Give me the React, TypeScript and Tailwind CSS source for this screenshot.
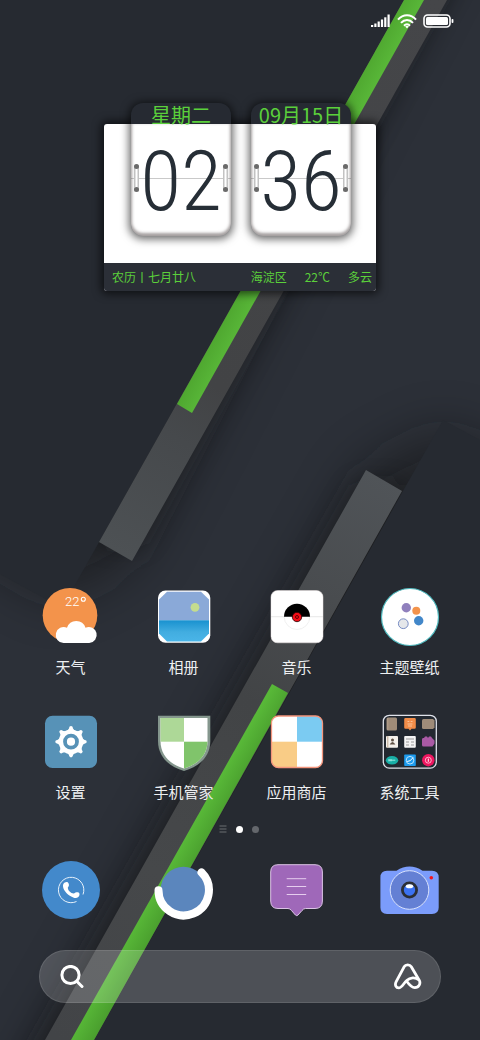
import type { ReactNode } from "react";

const CJK = "font-['Noto_Sans_CJK_SC',sans-serif]";

function Wallpaper() {
  return (
    <svg
      className="absolute inset-0 -z-10 h-full w-full"
      viewBox="0 0 480 1040"
      preserveAspectRatio="xMidYMid slice"
      aria-hidden="true"
    >
      <defs>
        <filter id="soft" x="-50%" y="-50%" width="200%" height="200%">
          <feGaussianBlur stdDeviation="26" />
        </filter>
        <filter id="tight" x="-50%" y="-50%" width="200%" height="200%">
          <feGaussianBlur stdDeviation="13" />
        </filter>
        <linearGradient id="grayTop" gradientUnits="userSpaceOnUse" x1="440" y1="0" x2="115" y2="550">
          <stop offset="0" stopColor="#454649" />
          <stop offset="0.7" stopColor="#424345" />
          <stop offset="0.8" stopColor="#46494c" />
          <stop offset="1" stopColor="#4d5154" />
        </linearGradient>
        <linearGradient id="grayLow" gradientUnits="userSpaceOnUse" x1="385" y1="480" x2="60" y2="1040">
          <stop offset="0" stopColor="#505458" />
          <stop offset="0.4" stopColor="#424446" />
          <stop offset="0.7" stopColor="#46484a" />
          <stop offset="1" stopColor="#424447" />
        </linearGradient>
        <linearGradient id="greenTop" gradientUnits="userSpaceOnUse" x1="207" y1="346" x2="225" y2="356">
          <stop offset="0" stopColor="#4ea62f" />
          <stop offset="1" stopColor="#58b638" />
        </linearGradient>
        <linearGradient id="greenLow" gradientUnits="userSpaceOnUse" x1="193" y1="824" x2="212" y2="835">
          <stop offset="0" stopColor="#58b838" />
          <stop offset="1" stopColor="#4a9f2e" />
        </linearGradient>
      </defs>
      <rect width="480" height="1040" fill="#2c3038" />
      <g fill="#121517">
        <path d="M-60 -60H450L132 561L60 600L-60 530Z" filter="url(#soft)" opacity=".5" />
        <path d="M-60 -60H475L140 545L99 542Z" filter="url(#tight)" opacity=".45" />
        <path d="M540 1100H10L366 470L443 430L540 478Z" filter="url(#soft)" opacity=".5" />
        <path d="M540 1100H8L358 484L402 485Z" filter="url(#tight)" opacity=".45" />
      </g>
      <path d="M0 0H404L62 608L0 574Z" fill="#262a31" />
      <path d="M404 0H447L132 561L99 542Z" fill="url(#grayTop)" />
      <path d="M404 0H424L192 413L177 404Z" fill="url(#greenTop)" />
      <path d="M480 440L443 420L94 1040H480Z" fill="#262a31" />
      <path d="M366 470L402 491L94 1040H45Z" fill="url(#grayLow)" />
      <path d="M272 684L288 693L94 1040H71Z" fill="url(#greenLow)" />
    </svg>
  );
}

function StatusBar() {
  return (
    <header className="flex h-[42px] items-center justify-end gap-[6px] pr-[26px] text-white">
      <svg width="20" height="14" viewBox="0 0 20 14" fill="currentColor" role="img" aria-label="信号">
        <rect x="0" y="11" width="2.200" height="2" />
        <rect x="3.300" y="9.500" width="2.200" height="3.500" />
        <rect x="6.600" y="7.500" width="2.200" height="5.500" />
        <rect x="9.900" y="5.500" width="2.200" height="7.500" />
        <rect x="13.200" y="3.300" width="2.200" height="9.700" />
        <rect x="16.500" y="0.500" width="2.200" height="12.500" />
      </svg>
      <svg width="20" height="15" viewBox="0 0 20 15" fill="none" stroke="currentColor" strokeWidth="2" role="img" aria-label="无线网络">
        <path d="M1 5.600C6-.2 14-.2 19 5.600" />
        <path d="M4 8.800C7.400 5 12.600 5 16 8.800" />
        <path d="M7 11.700C8.800 9.800 11.200 9.800 13 11.700" />
        <path d="M8.200 12.600Q10 11 11.800 12.600L10 14.600Z" fill="currentColor" stroke="none" />
      </svg>
      <svg width="31" height="14" viewBox="0 0 31 14" role="img" aria-label="电量">
        <rect x="1" y="1" width="26" height="12" rx="3.500" fill="none" stroke="currentColor" strokeWidth="1.600" />
        <rect x="3" y="3" width="22" height="8" rx="1.500" fill="currentColor" />
        <rect x="28.600" y="5" width="1.800" height="4" rx=".8" fill="currentColor" />
      </svg>
    </header>
  );
}

function Hinge() {
  return (
    <span className="relative mt-10 flex h-7 w-[5px] flex-col justify-between rounded-full bg-linear-to-r from-[#b4b4b4] via-white to-[#b4b4b4]">
      <span className="h-[5px] rounded-full bg-[#6a6a6a]" />
      <span className="h-[5px] rounded-full bg-[#6a6a6a]" />
    </span>
  );
}

function FlipCard({ title, value }: { title: string; value: string }) {
  return (
    <div className="w-[100px] rounded-xl bg-[#262a32] shadow-[0_1px_8px_2px_rgba(0,0,0,0.6)]">
      <p className="h-[21px] text-center text-xl leading-6 whitespace-nowrap text-[#5bd03b]">{title}</p>
      <div className="flex h-28 items-start justify-between rounded-b-xl bg-white bg-[linear-gradient(#c9c9c9,#c9c9c9)] bg-[length:100%_1px] bg-[position:0_54px] bg-no-repeat px-[3px] shadow-[inset_0_-2px_3px_1px_rgba(90,80,80,0.55)]">
        <Hinge />
        <span className="font-['Liberation_Sans_Narrow','Roboto_Condensed','Liberation_Sans',sans-serif] text-[84px] leading-[116px] font-light text-[#262e36]">
          {value}
        </span>
        <Hinge />
      </div>
    </div>
  );
}

function ClockWidget() {
  return (
    <section className="mx-auto mt-[82px] w-[272px] rounded-[3px] bg-white shadow-[0_0_8px_3px_rgba(0,0,0,0.6)]">
      <div className="flex justify-center pb-[27px] pl-[2px]">
        <div className="-mt-[21px] flex gap-5">
          <FlipCard title="星期二" value="02" />
          <FlipCard title="09月15日" value="36" />
        </div>
      </div>
      <div className="flex h-7 items-center justify-between rounded-b-[3px] bg-[#2b2f37] pr-1 pl-2 text-xs text-[#5bd03b]">
        <span>农历丨七月廿八</span>
        <div className="flex gap-[18px]">
          <span>海淀区</span>
          <span>22℃</span>
          <span>多云</span>
        </div>
      </div>
    </section>
  );
}

function Icon({ children }: { children: ReactNode }) {
  return (
    <svg width="60" height="60" viewBox="0 0 60 60" aria-hidden="true">
      {children}
    </svg>
  );
}

const weather = (
  <Icon>
    <circle cx="29" cy="28.3" r="27.3" fill="#f3934b" />
    <text x="24" y="19" fontSize="13" fill="#fff" fontFamily="Roboto, sans-serif" fontWeight="300">22</text>
    <circle cx="42.3" cy="12.2" r="2" fill="none" stroke="#fff" strokeWidth="1.1" />
    <path d="M22.500 56A8 8 0 1 1 26 40.700A9.700 9.700 0 0 1 44.500 40.700A8 8 0 1 1 48.300 56Z" fill="#fff" />
  </Icon>
);

const album = (
  <Icon>
    <defs>
      <linearGradient id="sea" x1="0" y1="0" x2="0" y2="1">
        <stop offset="0" stopColor="#1991cf" />
        <stop offset="0.55" stopColor="#42ade0" />
        <stop offset="1" stopColor="#4ab5e8" />
      </linearGradient>
    </defs>
    <rect x="4" y="3.5" width="52.300" height="52.300" rx="7.500" fill="#fff" />
    <path d="M13 4.800H47L55 12.500V33.300H5V12.500Z" fill="#8aa9d8" />
    <path d="M5 33.300H55V46.500L47 54.500H13L5 46.500Z" fill="url(#sea)" />
    <circle cx="41" cy="20.300" r="4.400" fill="#c4dc8f" />
  </Icon>
);

const music = (
  <Icon>
    <rect x="4" y="3.500" width="52" height="52.300" rx="6.500" fill="#fff" stroke="#e8e0e0" strokeWidth=".5" />
    <path d="M4 29.700H56" stroke="#dcdcdc" strokeWidth=".7" />
    <circle cx="30" cy="29.700" r="12.800" fill="#fff" stroke="#e9e9e9" strokeWidth=".7" />
    <path d="M17 29.700A13 13 0 0 1 43 29.700Z" fill="#000" />
    <circle cx="30" cy="30" r="4.700" fill="#f20d18" stroke="#200" strokeWidth=".8" />
    <circle cx="30" cy="30" r="1.500" fill="none" stroke="#500" strokeWidth=".9" />
  </Icon>
);

const theme = (
  <Icon>
    <circle cx="30" cy="30" r="28.500" fill="#fff" stroke="#4fb9be" strokeWidth="1.200" />
    <circle cx="26.300" cy="20.700" r="4.700" fill="#9080bd" />
    <circle cx="36.300" cy="23.700" r="4" fill="#f3934b" />
    <circle cx="38.700" cy="33.700" r="4.700" fill="#4287c9" />
    <circle cx="23.300" cy="36.700" r="4.900" fill="#e5e7ea" stroke="#6a80bd" strokeWidth=".9" />
  </Icon>
);

const settings = (
  <Icon>
    <rect x="4" y="3.700" width="52" height="52.300" rx="7.500" fill="#5792b7" />
    <g transform="translate(30 29.700)" fill="#fff">
      {[0, 45, 90, 135, 180, 225, 270, 315].map((a) => (
        <g key={a} transform={`rotate(${a})`}>
          <path d="M-4 -10.500L-1.500 -14H1.500L4 -10.500Z" />
          <circle cx="0" cy="-13.900" r="1.800" />
        </g>
      ))}
      <circle r="12.300" />
      <circle r="6" fill="none" stroke="#5792b7" strokeWidth="3.800" />
    </g>
  </Icon>
);

const shield = (
  <Icon>
    <defs>
      <clipPath id="shieldClip">
        <path d="M6.500 6H53.500V29C53.500 43 44 52.500 30 56.500C16 52.500 6.500 43 6.500 29Z" />
      </clipPath>
    </defs>
    <path d="M4 3.700H56.300V29C56.300 44 46 54.500 30 59C14 54.500 4 44 4 29Z" fill="#84968d" />
    <g clipPath="url(#shieldClip)">
      <rect width="60" height="60" fill="#fff" />
      <rect width="30" height="29.700" fill="#add897" />
      <rect x="30" y="29.700" width="30" height="31" fill="#80c46b" />
    </g>
  </Icon>
);

const store = (
  <Icon>
    <defs>
      <clipPath id="storeClip">
        <rect x="4.500" y="4" width="51" height="51.500" rx="7" />
      </clipPath>
    </defs>
    <g clipPath="url(#storeClip)">
      <rect width="60" height="60" fill="#fff" />
      <rect x="30" width="30" height="29.700" fill="#7bcbf2" />
      <rect y="29.700" width="30" height="31" fill="#f9cc86" />
    </g>
    <rect x="4.500" y="4" width="51" height="51.500" rx="7" fill="none" stroke="#f4957c" strokeWidth="1.300" />
  </Icon>
);

const tools = (
  <Icon>
    <rect x="3.300" y="3.300" width="53" height="52.800" rx="6" fill="#222830" stroke="#dfe2ea" strokeWidth="1.300" />
    <rect x="6.500" y="5.500" width="10.500" height="13" rx="1.500" fill="#9f8c79" />
    <path d="M7.800 6V18" stroke="#b9a692" strokeWidth=".8" />
    <path d="M25.500 6H34.500Q35.800 6 35.800 7.300V15.500Q35.800 16.800 34.500 16.800H31.500L30 18.600L28.500 16.800H25.500Q24.200 16.800 24.200 15.500V7.300Q24.200 6 25.500 6Z" fill="#f18c48" />
    <path d="M27.500 9.500H29.300M30.700 9.500H32.500M27.500 12H32.500M28 14H32" stroke="#fbd0ae" strokeWidth=".8" />
    <path d="M43.500 7H53L54.500 8.500V15.500L53 17H43.500Q42 17 42 15.500V8.500Q42 7 43.500 7Z" fill="#9f8c79" />
    <rect x="6" y="24" width="12" height="11.800" rx="1" fill="#f4f1ec" />
    <path d="M7.800 24V35.800" stroke="#b9a692" />
    <circle cx="12.500" cy="28" r="1.500" fill="#5e5145" />
    <path d="M9.600 32.500Q12.500 27.500 15.400 32.500Z" fill="#5e5145" />
    <rect x="24.200" y="24" width="11.600" height="11.800" rx="1" fill="#f4f4f4" />
    <path d="M26 27H34M26 30H29M31 30H34M26 33H29M31 33H34" stroke="#999" strokeWidth="1.100" />
    <path d="M43 26H44L45 24.500H47L48 26L49 24.500H51L52 26L54.500 28.500V31.500L52.500 34.500H43.500Q42 34.500 42 33V27.500Q42 26 43 26Z" fill="#a95aa5" />
    <ellipse cx="12" cy="48.200" rx="6.200" ry="4.300" fill="#19afa7" />
    <path d="M8.700 48.200H15.300M9 47V49.400M11 47V49.400" stroke="#a9efe8" strokeWidth=".9" />
    <rect x="24.200" y="42.400" width="11.600" height="11.600" rx=".8" fill="#1c9bee" />
    <circle cx="30" cy="48.200" r="3.800" fill="none" stroke="#cdeaff" strokeWidth=".9" />
    <path d="M27.200 49.500L30 48.700L33.300 45.500" fill="none" stroke="#fff" strokeWidth="1" />
    <circle cx="48.300" cy="48.200" r="6.200" fill="#ee155f" />
    <circle cx="48.300" cy="48.200" r="3" fill="none" stroke="#ffc0d4" strokeWidth=".9" />
    <path d="M48.300 46.500V49.800" stroke="#fff" strokeWidth="1" />
  </Icon>
);

const phone = (
  <Icon>
    <circle cx="30" cy="30" r="29" fill="#4389cb" />
    <path d="M35.500 41.500A12.700 12.700 0 1 1 42 34.500" fill="none" stroke="#e6f1fb" strokeWidth="1" />
    <path
      d="M22.500 23.800C23.500 22 26.500 21 27.500 23.200C28.300 25 28 26.300 26.800 27.500C26.800 30.500 30 33.700 33 33.500C34.500 32.200 38.500 31.500 38.500 34.200C38.700 37 35.300 38.500 32.800 37.700C27.300 36 22.300 30.700 22 26.300C21.900 25.300 22 24.600 22.500 23.800Z"
      fill="#fff"
    />
  </Icon>
);

const browser = (
  <Icon>
    <circle cx="29.500" cy="29.500" r="22.800" fill="#5b86bd" />
    <path d="M47.500 12.400A25.200 25.200 0 1 1 4.500 30.200" fill="none" stroke="#fff" strokeWidth="8" strokeLinecap="round" />
  </Icon>
);

const message = (
  <Icon>
    <path
      d="M11 4.700H48Q55.400 4.700 55.400 12V41Q55.400 48.500 48 48.500H38.500Q36.500 48.500 35 50.500L31 55Q29.700 56.300 28.400 55L24.500 50.500Q23 48.500 21 48.500H11Q3.700 48.500 3.700 41V12Q3.700 4.700 11 4.700Z"
      fill="#9f68b9"
      stroke="#dcc4e6"
      strokeWidth="1"
    />
    <path d="M19.700 18.700H39.200M19.700 26.500H39.200M19.700 34.500H39.200" stroke="#e6cdee" strokeWidth="1" />
  </Icon>
);

const camera = (
  <Icon>
    <path d="M7 10.700H16.500Q29.500 2.500 42.500 10.700H52Q58.700 10.700 58.700 17.500V47.500Q58.700 54 52 54H7Q.4 54 .4 47.500V17.500Q.4 10.700 7 10.700Z" fill="#7b9cfb" />
    <circle cx="29.500" cy="30" r="19.300" fill="#6480d4" stroke="#d9e2fb" strokeWidth="1" />
    <circle cx="29.500" cy="30" r="8.500" fill="#2b2e35" />
    <circle cx="29.500" cy="30" r="5.700" fill="#3b72f2" />
    <ellipse cx="29.500" cy="26.200" rx="3.700" ry="2" fill="#fff" />
    <circle cx="51.300" cy="17.800" r="1.800" fill="#f5141c" />
  </Icon>
);

const apps = [
  { name: "天气", icon: weather },
  { name: "相册", icon: album },
  { name: "音乐", icon: music },
  { name: "主题壁纸", icon: theme },
  { name: "设置", icon: settings },
  { name: "手机管家", icon: shield },
  { name: "应用商店", icon: store },
  { name: "系统工具", icon: tools },
];

const dock = [
  { name: "电话", icon: phone },
  { name: "浏览器", icon: browser },
  { name: "短信", icon: message },
  { name: "相机", icon: camera },
];

function PageIndicator() {
  return (
    <div className="mt-[22px] flex h-[10px] items-center justify-center gap-[9px] pr-[2px]">
      <svg width="8" height="8" viewBox="0 0 8 8" stroke="#6b6e72" strokeWidth="1.200" aria-hidden="true">
        <path d="M.5 1H7.500M.5 4H7.500M.5 7H7.500" />
      </svg>
      <span className="size-[7px] rounded-full bg-white" />
      <span className="size-[7px] rounded-full bg-[#64676c]" />
    </div>
  );
}

function SearchBar() {
  return (
    <form
      className="mx-[39px] mt-[30px] mb-[37px] flex h-[53px] items-center rounded-full border border-white/10 bg-white/18 pr-[18px] pl-5 text-white"
      onSubmit={(e) => e.preventDefault()}
    >
      <label htmlFor="search" aria-label="搜索">
        <svg width="24" height="24" viewBox="0 0 24 24" fill="none" stroke="currentColor" strokeWidth="3" strokeLinecap="round" aria-hidden="true">
          <circle cx="10.500" cy="10" r="8.600" />
          <path d="M17 16.500L22 21.500" />
        </svg>
      </label>
      <input id="search" type="text" className="min-w-0 flex-1 bg-transparent px-3 text-base outline-none" />
      <button type="button" aria-label="语音助手">
        <svg width="28" height="27" viewBox="0 0 28 27" fill="none" stroke="currentColor" strokeWidth="2.800" strokeLinecap="round" strokeLinejoin="round" aria-hidden="true">
          <path d="M12.700 18.300C15 21.500 17.500 24.700 20.700 24.700C25 24.700 27 20.500 25.200 17.200L17.300 3.800C15.700 1.100 11.700 1.100 10.100 3.800L2.200 18.700C.4 22 2.200 24.900 4.700 24.900C8 24.900 9.500 20.300 12.700 17.500C16 14.200 21.500 13.800 25 17" />
        </svg>
      </button>
    </form>
  );
}

export default function App() {
  return (
    <div className={`relative isolate flex min-h-screen flex-col overflow-hidden ${CJK}`}>
      <Wallpaper />
      <StatusBar />
      <ClockWidget />
      <main className="mt-auto">
        <div className="grid grid-cols-4 gap-y-[35px] px-[14px] pt-8">
          {apps.map((app) => (
            <button key={app.name} type="button" className="flex flex-col items-center gap-[10px]">
              {app.icon}
              <span className="text-[15px] leading-5 text-[#eef0f2]">{app.name}</span>
            </button>
          ))}
        </div>
        <PageIndicator />
        <nav className="mt-[26px] grid grid-cols-4 px-[14px]">
          {dock.map((app) => (
            <button key={app.name} type="button" aria-label={app.name} className="flex justify-center">
              {app.icon}
            </button>
          ))}
        </nav>
      </main>
      <SearchBar />
    </div>
  );
}
